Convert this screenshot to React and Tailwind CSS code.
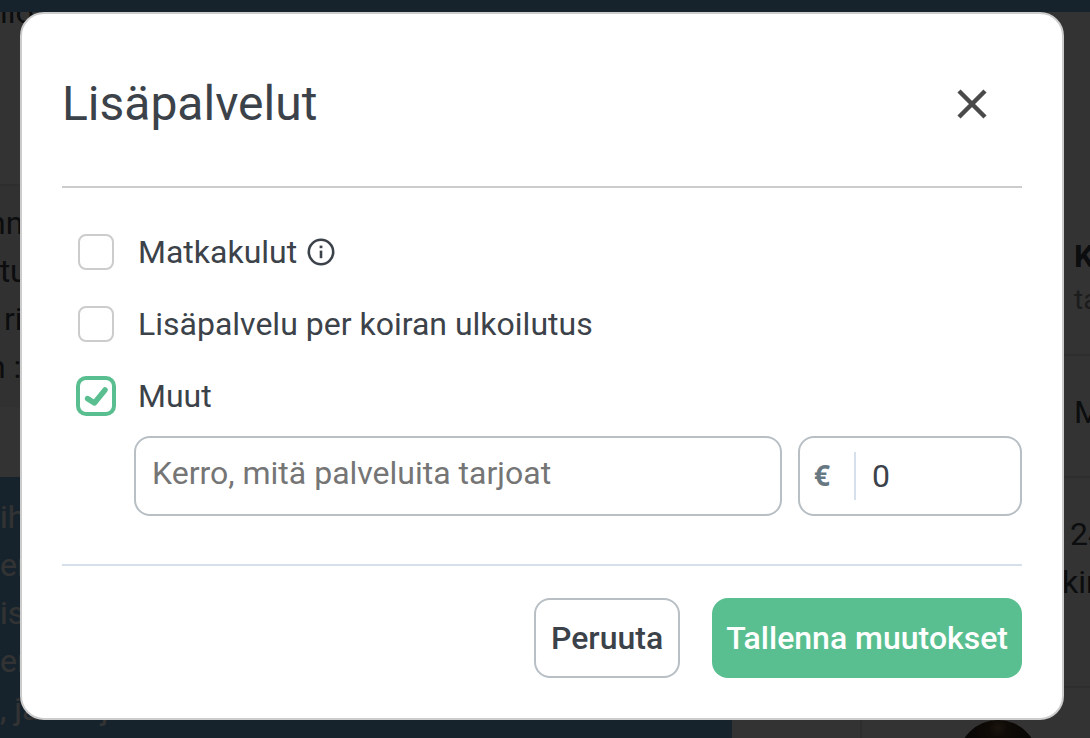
import { useState } from 'react';

const CHAT_LINES = ['nn', 'rtu', '  ri', 'n :)'];
const BUBBLE_LINES = ['ih', 'er', 'is', 'er', ', ja nuoj'];

const PageBehind = () => (
  <div aria-hidden="true" className="absolute inset-0 flex flex-col overflow-hidden bg-white text-[32px] leading-[48px] text-[#3c4249]">
    <div className="h-3 shrink-0 bg-[#6eafdc]" />
    <div className="flex min-h-0 flex-1 overflow-hidden">
      <div className="min-w-0 flex-1">
        <div className="h-[174px] overflow-hidden border-b-2 border-[#e6e6e6]">
          <p className="-mt-6">llo</p>
        </div>
        <div className="h-[221px] bg-[#f6f6f6] pt-[13px]">
          {CHAT_LINES.map((line) => (
            <p key={line} className="-ml-3 whitespace-pre">{line}</p>
          ))}
        </div>
        <div className="mt-[70px] mr-[128px] h-[300px] bg-[#6eafdc] pt-4 text-white">
          {BUBBLE_LINES.map((line, i) => (
            <p key={i} className="whitespace-pre">{line}</p>
          ))}
        </div>
      </div>
      <div className="flex w-[230px] shrink-0 flex-col border-l-2 border-[#e6e6e6] pt-[220px] whitespace-nowrap">
        <div className="h-[124px] shrink-0 border-b-2 border-[#e6e6e6] pl-[212px]">
          <p className="font-bold">Koira</p>
          <p className="text-[28px] leading-10 text-[#8c8c8c]">tarvitsee</p>
        </div>
        <div className="h-[122px] shrink-0 border-b-2 border-[#e6e6e6] pt-8 pl-[212px]">
          <p>Muut</p>
        </div>
        <div className="h-[210px] shrink-0 border-b-2 border-[#e6e6e6] pt-8 pl-[200px]">
          <p className="pl-2">24</p>
          <p>kintaan</p>
        </div>
        <div className="mt-8 ml-24 size-20 shrink-0 rounded-full bg-[radial-gradient(circle_at_50%_10%,#8a6a4a_0%,#4a3422_12%,#26241c_40%,#3c3a30_100%)]" />
      </div>
    </div>
  </div>
);

const InfoIcon = () => (
  <svg viewBox="0 0 28 28" className="size-7" fill="none" stroke="currentColor" aria-hidden="true">
    <circle cx="14" cy="14" r="12.2" strokeWidth="2.6" />
    <path d="M14 12.6v7.6" strokeWidth="2.6" />
    <path d="M14 7.6v2.6" strokeWidth="2.8" />
  </svg>
);

const CheckboxRow = ({ id, label, checked, onChange, children }) => (
  <div className="flex h-[72px] items-center pl-4">
    <span className="relative flex size-9 shrink-0">
      <input
        id={id}
        type="checkbox"
        checked={checked}
        onChange={onChange}
        className="size-9 cursor-pointer appearance-none rounded-lg border-2 border-[#cccccc] bg-white checked:border-[#5abf90] checked:ring-2 checked:ring-[#5abf90]"
      />
      {checked && (
        <svg viewBox="0 0 36 36" className="pointer-events-none absolute inset-0 size-9" fill="none" aria-hidden="true">
          <path d="M9.6 20.6l6.8 4.4L27 12" stroke="#5abf90" strokeWidth="5.5" strokeLinecap="round" strokeLinejoin="round" />
        </svg>
      )}
    </span>
    <label htmlFor={id} className="ml-6 cursor-pointer">{label}</label>
    {children}
  </div>
);

const App = () => {
  const [selected, setSelected] = useState({ travel: false, perDog: false, other: true });
  const [description, setDescription] = useState('');
  const [price, setPrice] = useState('0');

  const toggle = (key) => setSelected((prev) => ({ ...prev, [key]: !prev[key] }));

  return (
    <div className="relative min-h-screen overflow-hidden pt-3 pr-[26px] pb-[18px] pl-5 font-[Roboto,sans-serif] text-[32px] leading-10 text-[#3c4249]">
      <PageBehind />
      <div className="absolute inset-0 bg-black/80" />

      <div role="dialog" aria-modal="true" aria-labelledby="dialog-title" className="relative rounded-3xl border-2 border-[#cccccc] bg-white px-10 pb-10">
        <header className="flex items-center justify-between border-b-2 border-[#cccccc] pt-[58px] pb-[50px]">
          <h2 id="dialog-title" className="text-[48px] leading-[64px]">Lisäpalvelut</h2>
          <button type="button" aria-label="Sulje" className="flex h-16 w-[100px] cursor-pointer items-center justify-center text-[#4a4a4a]">
            <svg viewBox="0 0 28 28" className="size-7 overflow-visible" fill="none" stroke="currentColor" strokeWidth="4.5" aria-hidden="true">
              <path d="M1 1l26 26M27 1L1 27" />
            </svg>
          </button>
        </header>

        <form onSubmit={(e) => e.preventDefault()}>
          <div className="pt-7">
            <CheckboxRow id="travel" label="Matkakulut" checked={selected.travel} onChange={() => toggle('travel')}>
              <button type="button" aria-label="Lisätietoja" className="ml-2.5 cursor-pointer">
                <InfoIcon />
              </button>
            </CheckboxRow>
            <CheckboxRow
              id="perDog"
              label="Lisäpalvelu per koiran ulkoilutus"
              checked={selected.perDog}
              onChange={() => toggle('perDog')}
            />
            <CheckboxRow id="other" label="Muut" checked={selected.other} onChange={() => toggle('other')} />
          </div>

          {selected.other && (
            <div className="mt-1 ml-[72px] flex gap-4">
              <input
                type="text"
                aria-label="Kerro, mitä palveluita tarjoat"
                placeholder="Kerro, mitä palveluita tarjoat"
                value={description}
                onChange={(e) => setDescription(e.target.value)}
                className="h-20 min-w-0 flex-1 rounded-2xl border-2 border-[#b8bfc5] px-4 pb-1.5 placeholder:text-[#757575]"
              />
              <div className="flex h-20 w-56 shrink-0 items-center rounded-2xl border-2 border-[#b8bfc5] pl-3.5">
                <label htmlFor="price" className="w-10 pb-0.5 font-['Open_Sans',sans-serif] text-[28px] font-bold text-[#687882]">€</label>
                <input
                  id="price"
                  type="text"
                  inputMode="decimal"
                  value={price}
                  onChange={(e) => setPrice(e.target.value)}
                  className="h-12 min-w-0 flex-1 border-l-2 border-[#d6e0ea] pl-4"
                />
              </div>
            </div>
          )}

          <div className="mt-12 flex justify-end gap-8 border-t-2 border-[#d6e0ea] pt-8">
            <button type="button" className="h-20 cursor-pointer rounded-2xl border-2 border-[#b8bfc5] px-[15px] font-medium">
              Peruuta
            </button>
            <button type="submit" className="h-20 cursor-pointer rounded-2xl bg-[#5abf90] px-3.5 font-medium text-white">
              Tallenna muutokset
            </button>
          </div>
        </form>
      </div>
    </div>
  );
};

export default App;
